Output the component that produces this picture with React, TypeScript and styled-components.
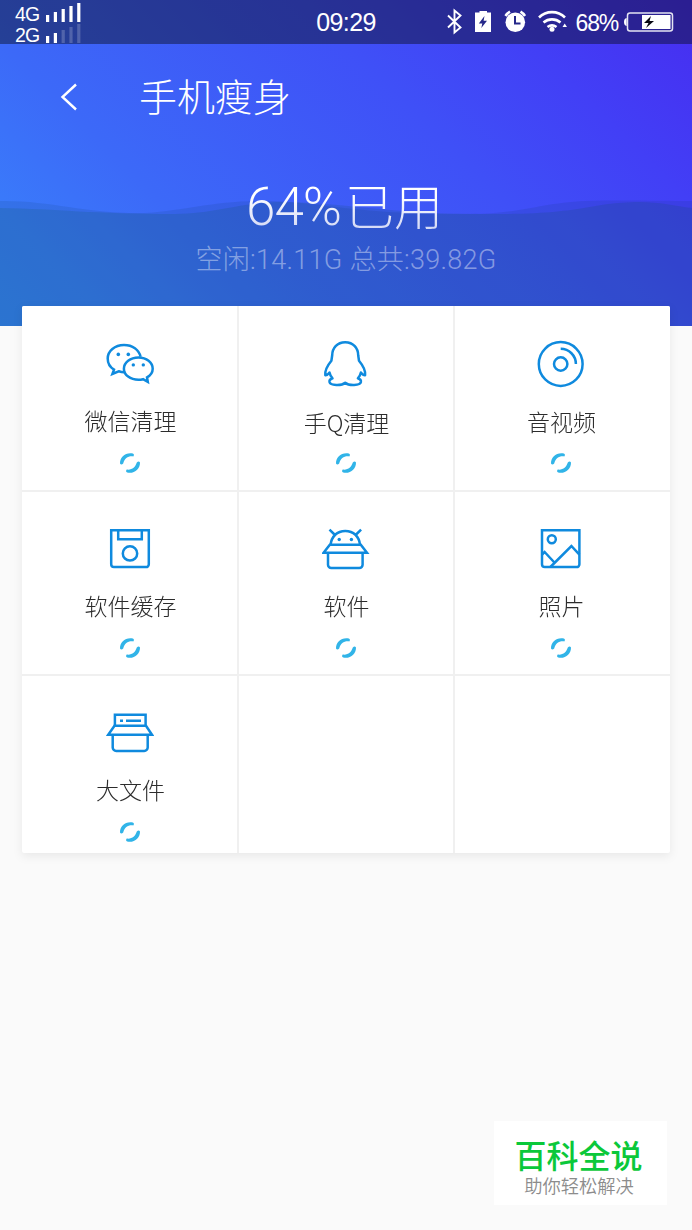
import React from 'react';
import styled, { createGlobalStyle } from 'styled-components';

const GlobalStyle = createGlobalStyle`
  * { box-sizing: border-box; }
  body {
    margin: 0;
    background: #fafafa;
    font-family: 'Noto Sans CJK SC', 'Liberation Sans', sans-serif;
    font-weight: 300;
  }
`;

const Screen = styled.div`
  position: relative;
  width: 692px;
  height: 1230px;
  overflow: hidden;
  background: #fafafa;
`;

const Header = styled.header`
  position: relative;
  height: 326px;
  background: linear-gradient(45deg, #3882fa 0%, #3a7afa 12%, #3c69f8 28%, #3f50f7 62%, #423ff6 80%, #472df0 100%);
`;

const StatusBar = styled.div`
  display: flex;
  align-items: center;
  height: 44px;
  padding: 0 18px 0 15px;
  background: rgba(8, 12, 24, 0.44);
  color: #fff;
  font-family: 'Liberation Sans', Arial, sans-serif;
  font-weight: 400;
`;

const Networks = styled.div`
  display: flex;
  flex-direction: column;
  width: 280px;
  padding-top: 5px;
`;

const Network = styled.div`
  display: flex;
  align-items: flex-start;
  gap: 7px;
  height: 21px;
  font-size: 19.5px;
  letter-spacing: -0.8px;
  line-height: 21px;
`;

const SignalBars = styled.svg`
  flex: none;
  width: 35px;
  height: 19px;
  margin-top: -1px;
`;

const Clock = styled.div`
  width: 102px;
  text-align: center;
  font-size: 25px;
  letter-spacing: -0.6px;
  line-height: 46px;
`;

const StatusIcons = styled.div`
  display: flex;
  align-items: center;
  margin-left: auto;
`;

const Percent = styled.span`
  margin: 2px 6px 0 8px;
  font-size: 23px;
  letter-spacing: -1.2px;
`;

const BatteryIcon = styled.svg`
  flex: none;
  width: 50px;
  height: 22px;
`;

const NavBar = styled.nav`
  display: flex;
  align-items: center;
  height: 106px;
  padding-left: 60px;
`;

const BackIcon = styled.svg`
  width: 18px;
  height: 28px;
`;

const Title = styled.h1`
  margin: -4px 0 0 61px;
  color: #fff;
  font-size: 38px;
  font-weight: 300;
  line-height: 102px;
`;

const Usage = styled.div`
  position: relative;
  z-index: 1;
  padding-top: 21px;
  text-align: center;
`;

const UsedLine = styled.div`
  height: 71px;
  padding-right: 3px;
  background: linear-gradient(#fff 35%, #d3d9f6 82%);
  background-clip: text;
  -webkit-background-clip: text;
  color: transparent;
  font-family: Roboto, 'Noto Sans CJK SC', sans-serif;
  font-size: 49px;
  line-height: 72px;
`;

const UsedValue = styled.span`
  margin-right: 4px;
  font-size: 53px;
  letter-spacing: -1px;
`;

const DetailLine = styled.div`
  color: rgba(255, 255, 255, 0.42);
  font-family: Roboto, 'Noto Sans CJK SC', sans-serif;
  font-size: 27px;
  letter-spacing: 0.28px;
  line-height: 36px;
`;

const Waves = styled.svg`
  position: absolute;
  left: 0;
  bottom: 0;
  width: 692px;
  height: 130px;
`;

const CardShadow = styled.div`
  filter: drop-shadow(0 3px 5px rgba(0, 0, 0, 0.07));
`;

const Card = styled.main`
  position: relative;
  display: grid;
  grid-template-columns: 215px 214px 215px;
  grid-template-rows: 184px 182px 177px;
  gap: 2px;
  width: 648px;
  margin: -20px 0 0 22px;
  border-radius: 2px;
  overflow: hidden;
  background: #f0f0f0;
`;

const Cell = styled.section<{ $top: number; $right?: number }>`
  display: flex;
  flex-direction: column;
  align-items: center;
  padding-top: ${(p) => p.$top}px;
  padding-right: ${(p) => p.$right ?? 0}px;
  background: #fff;
`;

const CellIcon = styled.svg`
  flex: none;
  width: 48px;
  height: 48px;
  fill: none;
  stroke: #0f8ade;
  stroke-width: 2.5;
`;

const Label = styled.div<{ $drop?: number }>`
  height: 63px;
  padding: ${(p) => 15 + (p.$drop ?? 0)}px 0 0 2px;
  color: #2c2c2c;
  font-size: 23px;
  line-height: 34px;
`;

const SpinnerIcon = styled.svg`
  flex: none;
  width: 24px;
  height: 24px;
  fill: #31b4e8;
`;

const Badge = styled.aside`
  position: absolute;
  left: 494px;
  top: 1121px;
  width: 173px;
  height: 84px;
  padding-top: 13px;
  background: #fff;
  text-align: center;
`;

const BadgeName = styled.div`
  padding-right: 4px;
  color: #0bc83a;
  font-size: 32px;
  font-weight: 500;
  line-height: 40px;
`;

const BadgeText = styled.div`
  padding: 1px 3px 0 0;
  color: #8c8c8c;
  font-size: 18.3px;
  font-weight: 350;
  line-height: 20px;
`;

const Signal = ({ active }: { active: number }) => (
  <SignalBars viewBox="0 0 35 19">
    {[7, 10, 13, 16, 19].map((h, i) => (
      <rect key={h} x={i * 7.8} y={19 - h} width="3.200" height={h} fill="#fff" opacity={i < active ? 1 : 0.2} />
    ))}
  </SignalBars>
);

const Spinner = () => (
  <SpinnerIcon viewBox="0 0 24 24">
    <path d="M2 12.500C1.800 6 7.500 1 14.800 2.400Q16.800 3.300 15.300 5.400C9.900 4.800 6.800 7.400 5.200 12.400Q3.300 14.400 2 12.500Z" />
    <path d="M22 11.500C22.200 18 16.500 23 9.200 21.600Q7.200 20.700 8.700 18.600C14.100 19.200 17.200 16.600 18.800 11.600Q20.700 9.600 22 11.500Z" />
  </SpinnerIcon>
);

const WeChat = (
  <>
    <path d="M34.6 16.8C33 9.500 26.500 5 18 5C8.700 5 1.700 11 1.700 18.500C1.700 23.500 4 27.200 8 29.600L6.400 34L12.700 31.300C14.800 32 17 32.300 19.200 32.200" />
    <path d="M32.500 17.400C24.300 17.400 17.900 22.300 17.900 28.700C17.900 35 24.300 39.800 32.500 39.800C34 39.800 35.500 39.600 37 39.200L41.800 41.800L41 37.300C44.800 35.200 46.700 32.200 46.700 28.700C46.700 22.300 40.500 17.400 32.500 17.400Z" />
    <g fill="#0f8ade" stroke="none">
      <circle cx="12.300" cy="14.400" r="1.800" />
      <circle cx="22.300" cy="14.400" r="1.800" />
      <circle cx="27.300" cy="24.900" r="1.700" />
      <circle cx="37.300" cy="24.900" r="1.700" />
    </g>
  </>
);

const Penguin = (
  <path
    strokeLinejoin="round"
    d="M23.200 2.200C15 2.200 10.200 8.300 10.200 15.300L9.400 20.700C6 24.800 2.600 30 3.300 35.200C4.800 35.500 6.500 33.800 7.500 32.500C7.900 34.600 9 36.700 10.500 38.300C8.500 39 7.200 40.400 7.500 42C8.300 45.700 19.500 46 23.200 42.700C26.900 46 38.100 45.700 38.900 42C39.200 40.400 37.900 39 35.900 38.300C37.400 36.700 38.500 34.600 38.900 32.500C39.900 33.800 41.600 35.500 43.100 35.200C43.800 30 40.400 24.800 37 20.700L36.200 15.300C36.200 8.300 31.400 2.200 23.200 2.200Z"
  />
);

const Disc = (
  <>
    <circle cx="23.700" cy="24" r="21.900" />
    <circle cx="23.700" cy="24" r="6.700" />
    <path d="M23.700 8.800A15.200 15.200 0 0 1 38.900 24" />
  </>
);

const Floppy = (
  <>
    <path d="M5.200 5.300H42.800V39.300A2.800 2.800 0 0 1 40 42.100H8A2.800 2.800 0 0 1 5.200 39.300Z" />
    <path d="M12.200 5.300V14.200H35.800V5.300" />
    <circle cx="24" cy="28.400" r="7.200" />
  </>
);

const AndroidBox = (
  <>
    <path d="M8.500 20C9.500 11.500 15 5.900 23.300 5.900S37.100 11.500 38.100 20M7.500 4.600L12.500 9.500M39.100 4.600L34.100 9.500" />
    <path d="M7.800 19.700H38.800L45 27.800H1.600Z" />
    <path d="M6 27.800V39.800A3.300 3.300 0 0 0 9.300 43.100H37.300A3.300 3.300 0 0 0 40.600 39.800V27.800" />
    <g fill="#0f8ade" stroke="none">
      <circle cx="17.200" cy="14.500" r="1.700" />
      <circle cx="29.400" cy="14.500" r="1.700" />
    </g>
  </>
);

const Photo = (
  <>
    <path d="M5 5.200H42.400V39.300A2.800 2.800 0 0 1 39.600 42.100H7.800A2.800 2.800 0 0 1 5 39.300Z" />
    <circle cx="14.800" cy="14.200" r="4" />
    <path d="M5 29.500L7.600 27L17.400 37.500M13.400 42L34.400 21L42.400 29.600" />
  </>
);

const FileBox = (
  <>
    <path d="M8.900 16.800V5.800H39.600V16.800M14 11.700H17M20 11.700H35" />
    <path d="M8.500 16.800H40L46 25.800H2.200Z" />
    <path d="M6.700 25.800V38.500A3.500 3.500 0 0 0 10.200 42H38.200A3.500 3.500 0 0 0 41.700 38.500V25.800" />
  </>
);

const items = [
  { label: '微信清理', icon: WeChat, top: 34 },
  { label: '手Q清理', icon: Penguin, top: 34, right: 1, drop: 2 },
  { label: '音视频', icon: Disc, top: 34, right: 4, drop: 1 },
  { label: '软件缓存', icon: Floppy, top: 32.5 },
  { label: '软件', icon: AndroidBox, top: 32.5, right: 1 },
  { label: '照片', icon: Photo, top: 32.5, right: 4 },
  { label: '大文件', icon: FileBox, top: 33 },
];

export default function App() {
  return (
    <>
      <GlobalStyle />
      <Screen>
        <Header>
          <StatusBar>
            <Networks>
              <Network>4G<Signal active={5} /></Network>
              <Network>2G<Signal active={2} /></Network>
            </Networks>
            <Clock>09:29</Clock>
            <StatusIcons>
              <svg width="122" height="30" viewBox="446 7 122 30" fill="none" stroke="#fff" strokeWidth="2">
                <path d="M448 15.500L460.500 27.500L454.500 32.500V10.500L460.500 15.500L448 27.500" strokeWidth="1.900" />
                <path d="M475 12.500H479.500V11H487V12.500H491V32H475Z" fill="#fff" stroke="none" />
                <path d="M484.500 16L478.800 23.500H482.300L481.300 28L487 20.800H483.600Z" fill="#252889" stroke="none" />
                <circle cx="515.300" cy="22.200" r="9.800" fill="#fff" stroke="none" />
                <path d="M505.500 16A13 13 0 0 1 510 11.700M525 16A13 13 0 0 0 520.500 11.700" strokeWidth="2.600" />
                <path d="M515 16V23.500H520.500" stroke="#252889" />
                <path d="M539 17.500A18.500 18.500 0 0 1 565 17.500M543.500 22.500A13 13 0 0 1 560.500 22.500M547.500 27A7.500 7.500 0 0 1 556.500 27" strokeWidth="2.600" />
                <circle cx="552" cy="29.300" r="2.500" fill="#fff" stroke="none" />
                <path d="M562.500 27L564.700 23.500L567 27Z" fill="#fff" stroke="none" />
              </svg>
              <Percent>68%</Percent>
              <BatteryIcon viewBox="0 0 50 22" fill="none">
                <rect x="3.500" y="1.900" width="45" height="18" rx="2.500" stroke="#e4e4f2" strokeWidth="1.500" />
                <path d="M2.600 7Q0 7.500 0 11T2.600 15Z" fill="#fff" />
                <rect x="18" y="4" width="28.500" height="14" fill="#fff" />
                <path d="M27 5L20 12H24.500L22 17L30 10H25.500Z" fill="#080812" />
              </BatteryIcon>
            </StatusIcons>
          </StatusBar>
          <NavBar>
            <BackIcon viewBox="0 0 18 28" fill="none" stroke="#fff" strokeWidth="2.400">
              <path d="M16 1.500L2.500 14L16 26.500" />
            </BackIcon>
            <Title>手机瘦身</Title>
          </NavBar>
          <Usage>
            <UsedLine><UsedValue>64%</UsedValue>已用</UsedLine>
            <DetailLine>空闲:14.11G 总共:39.82G</DetailLine>
          </Usage>
          <Waves viewBox="0 196 692 130">
            <path d="M0 201C50 200 85 214 145 213C190 210 215 200 270 201C320 202 360 215 470 214C520 214 540 203 585 201C620 200 660 201 692 201V326H0Z" fill="#04304c" fillOpacity="0.1" />
            <path d="M0 208C60 209 90 214 175 214C220 213 230 204 280 202C340 202 390 214 480 214C590 215 580 203 640 202C660 202 675 206 692 208V326H0Z" fill="#04502c" fillOpacity="0.12" />
          </Waves>
        </Header>
        <CardShadow>
          <Card>
            {items.map((item) => (
              <Cell key={item.label} $top={item.top} $right={item.right}>
                <CellIcon viewBox="0 0 48 48">{item.icon}</CellIcon>
                <Label $drop={item.drop}>{item.label}</Label>
                <Spinner />
              </Cell>
            ))}
            <Cell $top={0} />
            <Cell $top={0} />
          </Card>
        </CardShadow>
        <Badge>
          <BadgeName>百科全说</BadgeName>
          <BadgeText>助你轻松解决</BadgeText>
        </Badge>
      </Screen>
    </>
  );
}
